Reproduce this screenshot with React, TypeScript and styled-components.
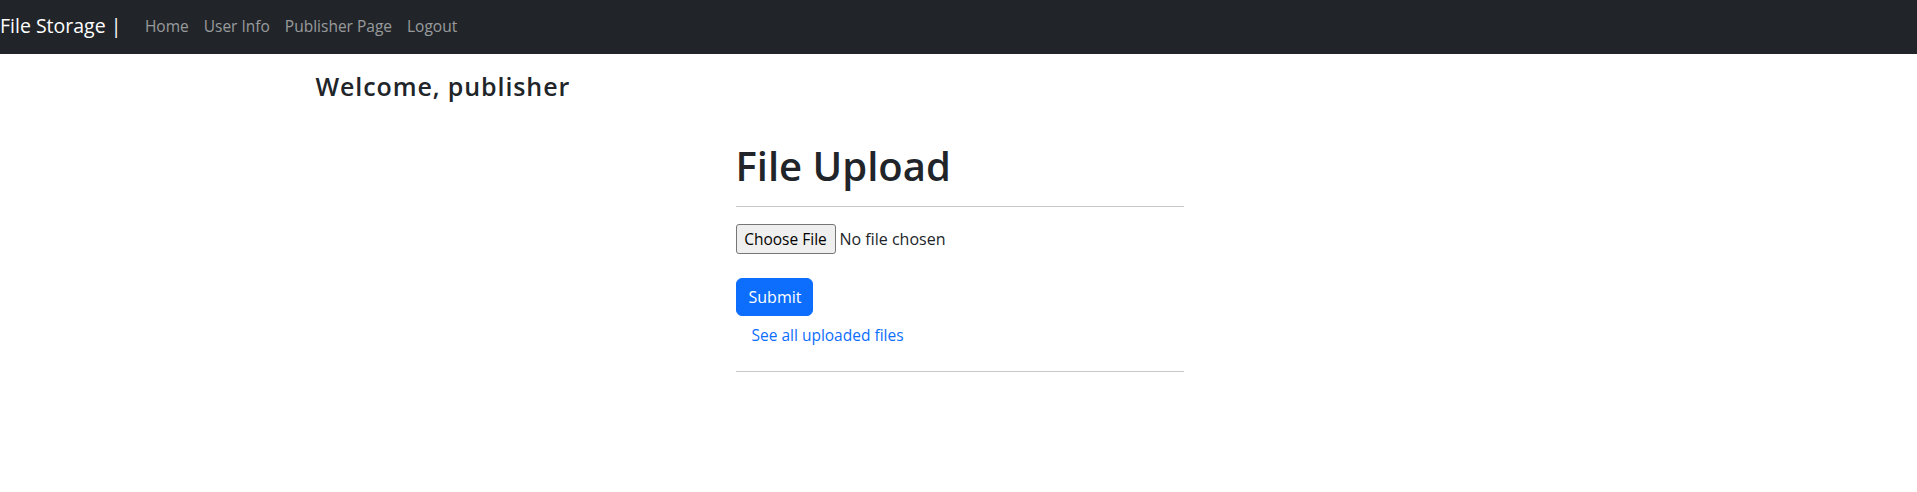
import React from "react";
import styled, { createGlobalStyle } from "styled-components";

const Global = createGlobalStyle`
  html, body { margin: 0; padding: 0; background: #fff; }
  body {
    font-family: "Open Sans", "Noto Sans", sans-serif;
    font-size: 16px;
    line-height: 1.5;
    color: #212529;
  }
  * { box-sizing: border-box; }
`;

const NavBar = styled.nav`
  height: 54px;
  background: #212529;
  display: flex;
  align-items: center;
  padding: 0;
`;

const Brand = styled.a`
  font-size: 19.5px;
  color: #fff;
  text-decoration: none;
  margin-right: 16px;
  line-height: 1.5;
  padding-bottom: 2px;
`;

const NavList = styled.div`
  display: flex;
  align-items: center;
`;

const NavLink = styled.a`
  color: rgba(255, 255, 255, 0.55);
  font-size: 15.5px;
  padding: 0 7.5px;
  text-decoration: none;
  line-height: 1.5;
`;

const Container = styled.div`
  max-width: 1320px;
  margin: 0 auto;
  padding: 0 12px 0 17px;
`;

const Welcome = styled.h4`
  font-size: 25px;
  font-weight: 600;
  letter-spacing: 0.9px;
  line-height: 1.2;
  margin: 17px 0 0 0;
`;

const UploadCard = styled.div`
  width: 448px;
  margin: 41px auto 0;
  position: relative;
  left: 1px;
`;

const Title = styled.h1`
  font-size: 40px;
  font-weight: 600;
  line-height: 1.2;
  margin: 0;
`;

const Rule = styled.hr<{ $top: number; $bottom: number }>`
  border: 0;
  border-top: 1px solid #c8c8c8;
  margin: ${(p) => `${p.$top}px 0 ${p.$bottom}px`};
`;

const FileRow = styled.div`
  display: flex;
  align-items: center;
  gap: 4px;
  font-size: 16px;
`;

const ChooseButton = styled.button`
  height: 30px;
  width: 100px;
  font-family: inherit;
  font-size: 15.5px;
  color: #000;
  background: #efefef;
  border: 1px solid #767676;
  border-radius: 3px;
  padding: 0 4px;
  white-space: nowrap;
`;

const SubmitButton = styled.button`
  display: block;
  margin-top: 24px;
  height: 38px;
  width: 77px;
  font-family: inherit;
  font-size: 16px;
  color: #fff;
  background: #0d6efd;
  border: 1px solid #0d6efd;
  border-radius: 6px;
  padding: 6px 12px;
`;

const ListLink = styled.a`
  display: inline-block;
  color: #0d6efd;
  text-decoration: none;
  padding: 8px 16px 0;
  font-size: 15.5px;
`;

export default function App() {
  return (
    <>
      <Global />
      <NavBar>
        <Brand href="#">File Storage |</Brand>
        <NavList>
          <NavLink href="#">Home</NavLink>
          <NavLink href="#">User Info</NavLink>
          <NavLink href="#">Publisher Page</NavLink>
          <NavLink href="#">Logout</NavLink>
        </NavList>
      </NavBar>
      <Container>
        <Welcome>Welcome, publisher</Welcome>
      </Container>
      <UploadCard>
        <Title>File Upload</Title>
        <Rule $top={16} $bottom={17} />
        <FileRow>
          <ChooseButton type="button">Choose File</ChooseButton>
          <span>No file chosen</span>
        </FileRow>
        <SubmitButton type="button">Submit</SubmitButton>
        <ListLink href="#">See all uploaded files</ListLink>
        <Rule $top={24} $bottom={0} />
      </UploadCard>
    </>
  );
}
